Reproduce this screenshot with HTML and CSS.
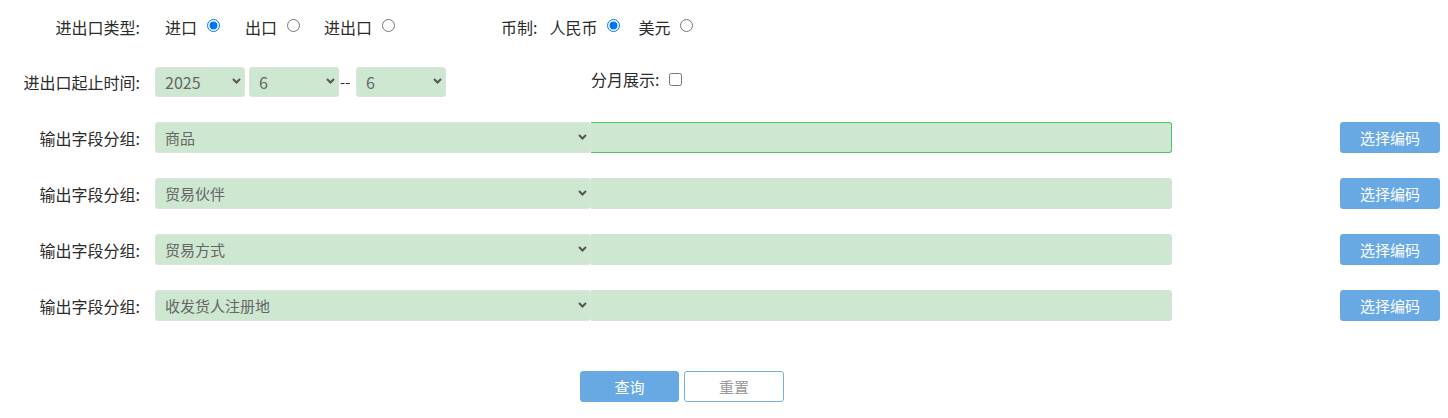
FILE: index.html
```html
<!DOCTYPE html>
<html lang="zh-CN">
<head>
<meta charset="utf-8">
<title>查询</title>
<link rel="stylesheet" href="styles.css">
</head>
<body>
<form class="form">
  <div class="row row-top">
    <span class="label">进出口类型:</span>
    <div class="type-block">
      <label class="opt">进口<input type="radio" name="ie" checked></label>
      <label class="opt opt-gap">出口<input type="radio" name="ie"></label>
      <label class="opt opt-gap2">进出口<input type="radio" name="ie"></label>
    </div>
    <div class="currency">
      <span class="inline-label">币制:</span>
      <label class="opt opt-first">人民币<input type="radio" name="cur" checked></label>
      <label class="opt opt-gap3">美元<input type="radio" name="cur"></label>
    </div>
  </div>

  <div class="row row-date">
    <span class="label">进出口起止时间:</span>
    <div class="dates">
      <div class="select-wrap small">
        <select class="sel sel-num"><option>2025</option></select>
        <svg class="chev" width="9" height="6" viewBox="0 0 9 6"><path d="M1 1l3.5 3.5L8 1" fill="none" stroke="#555" stroke-width="2"/></svg>
      </div>
      <div class="select-wrap small gap5">
        <select class="sel sel-num"><option>6</option></select>
        <svg class="chev" width="9" height="6" viewBox="0 0 9 6"><path d="M1 1l3.5 3.5L8 1" fill="none" stroke="#555" stroke-width="2"/></svg>
      </div>
      <span class="sep">--</span>
      <div class="select-wrap small">
        <select class="sel sel-num"><option>6</option></select>
        <svg class="chev" width="9" height="6" viewBox="0 0 9 6"><path d="M1 1l3.5 3.5L8 1" fill="none" stroke="#555" stroke-width="2"/></svg>
      </div>
    </div>
    <label class="monthly">分月展示:<input type="checkbox"></label>
  </div>

  <div class="row row-field">
    <span class="label">输出字段分组:</span>
    <div class="combo">
      <div class="select-wrap big">
        <select class="sel"><option>商品</option></select>
        <svg class="chev" width="9" height="6" viewBox="0 0 9 6"><path d="M1 1l3.5 3.5L8 1" fill="none" stroke="#555" stroke-width="2"/></svg>
      </div>
      <input class="codes focused" type="text">
    </div>
    <button type="button" class="btn btn-code">选择编码</button>
  </div>

  <div class="row row-field">
    <span class="label">输出字段分组:</span>
    <div class="combo">
      <div class="select-wrap big">
        <select class="sel"><option>贸易伙伴</option></select>
        <svg class="chev" width="9" height="6" viewBox="0 0 9 6"><path d="M1 1l3.5 3.5L8 1" fill="none" stroke="#555" stroke-width="2"/></svg>
      </div>
      <input class="codes" type="text">
    </div>
    <button type="button" class="btn btn-code">选择编码</button>
  </div>

  <div class="row row-field">
    <span class="label">输出字段分组:</span>
    <div class="combo">
      <div class="select-wrap big">
        <select class="sel"><option>贸易方式</option></select>
        <svg class="chev" width="9" height="6" viewBox="0 0 9 6"><path d="M1 1l3.5 3.5L8 1" fill="none" stroke="#555" stroke-width="2"/></svg>
      </div>
      <input class="codes" type="text">
    </div>
    <button type="button" class="btn btn-code">选择编码</button>
  </div>

  <div class="row row-field">
    <span class="label">输出字段分组:</span>
    <div class="combo">
      <div class="select-wrap big">
        <select class="sel"><option>收发货人注册地</option></select>
        <svg class="chev" width="9" height="6" viewBox="0 0 9 6"><path d="M1 1l3.5 3.5L8 1" fill="none" stroke="#555" stroke-width="2"/></svg>
      </div>
      <input class="codes" type="text">
    </div>
    <button type="button" class="btn btn-code">选择编码</button>
  </div>

  <div class="actions">
    <button type="button" class="btn btn-query">查询</button>
    <button type="button" class="btn btn-reset">重置</button>
  </div>
</form>
</body>
</html>
```

FILE: styles.css
```css
* { box-sizing: border-box; }

html, body {
  margin: 0;
  padding: 0;
  background: #fff;
}

body {
  font-family: "Noto Sans CJK SC", "Noto Sans", sans-serif;
  font-size: 16px;
  color: #2b2b2b;
  width: 1448px;
  height: 418px;
  overflow: hidden;
}

.form {
  display: flex;
  flex-direction: column;
  gap: 25px;
  padding: 12px 8px 0 0;
}

.row {
  display: flex;
  align-items: center;
  height: 31px;
}

.row-top { height: 30px; }
.row-date { height: 30px; }

.label {
  width: 140px;
  flex: none;
  text-align: right;
  line-height: 20px;
  white-space: nowrap;
}

.type-block {
  width: 361px;
  flex: none;
  display: flex;
  align-items: center;
  padding-left: 25px;
}

.opt {
  display: flex;
  align-items: center;
  line-height: 20px;
  white-space: nowrap;
}

.opt input {
  margin: 0 0 3px 10px;
  width: 13px;
  height: 13px;
}

.opt-gap { margin-left: 25px; }
.opt-gap2 { margin-left: 24px; }
.opt-first { margin-left: 12px; }
.opt-gap3 { margin-left: 18px; }

.currency {
  display: flex;
  align-items: center;
}

.inline-label {
  line-height: 20px;
}

.dates {
  display: flex;
  align-items: center;
  margin-left: 15px;
  height: 30px;
}

.select-wrap {
  position: relative;
  height: 100%;
}

.select-wrap.small { width: 90px; }
.select-wrap.gap5 { margin-left: 4px; }

.select-wrap.big {
  width: 436px;
  flex: none;
}

.sel {
  appearance: none;
  -webkit-appearance: none;
  width: 100%;
  height: 100%;
  margin: 0;
  padding: 0 20px 0 9px;
  border: 1px solid #dbe3dc;
  border-radius: 3px;
  background: #cde7d1;
  color: #666;
  font-family: "Noto Sans CJK SC", "Noto Sans", sans-serif;
  font-size: 15px;
  outline: none;
}

.sel.sel-num {
  font-size: 16px;
  padding-left: 9px;
}

.chev {
  position: absolute;
  right: 4px;
  top: 50%;
  margin-top: -4px;
  pointer-events: none;
}

.sep {
  width: 17px;
  flex: none;
  padding-left: 1px;
  line-height: 20px;
  font-size: 15px;
}

.monthly {
  display: flex;
  align-items: center;
  margin-left: 145px;
  margin-bottom: 6px;
  line-height: 20px;
  white-space: nowrap;
}

.monthly input {
  margin: 0 0 0 10px;
  width: 13px;
  height: 13px;
}

.combo {
  display: flex;
  width: 1017px;
  height: 31px;
  margin-left: 15px;
  flex: none;
}

.codes {
  flex: 1;
  height: 100%;
  margin: 0;
  border: 1px solid #d6e0d7;
  border-left: none;
  border-radius: 0 3px 3px 0;
  background: #cde7d1;
  font-family: "Noto Sans CJK SC", "Noto Sans", sans-serif;
  font-size: 15px;
  outline: none;
}

.codes.focused {
  border-color: #4cc46b;
}

.btn {
  height: 31px;
  width: 100px;
  border-radius: 3px;
  font-family: "Noto Sans CJK SC", "Noto Sans", sans-serif;
  font-size: 15px;
  padding: 0;
  cursor: pointer;
}

.btn-code {
  margin-left: auto;
  background: #68a9e3;
  border: 1px solid #68a9e3;
  color: #fff;
}

.actions {
  display: flex;
  justify-content: flex-start;
  gap: 5px;
  margin-top: 25px;
  padding-left: 580px;
}

.btn-query {
  width: 99px;
  background: #68a9e3;
  border: 1px solid #68a9e3;
  color: #fff;
}

.btn-reset {
  width: 100px;
  background: #fff;
  border: 1px solid #78ade0;
  color: #999;
}
```
